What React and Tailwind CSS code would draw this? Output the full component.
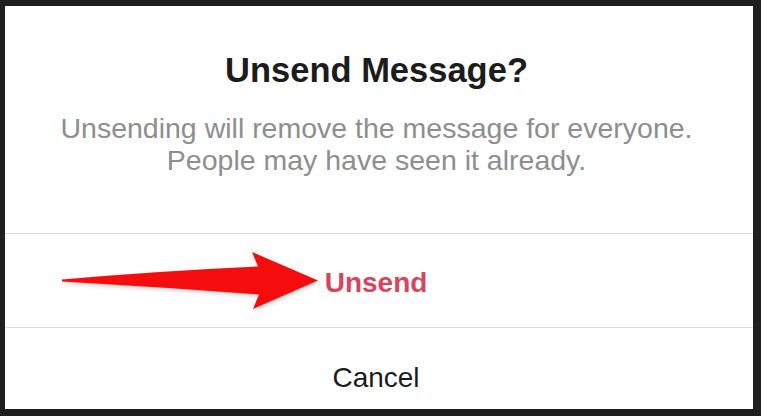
export default function App() {
  return (
    <div
      className="relative w-[761px] h-[416px] bg-[#1f1f1f] pt-[6px] pl-[5px] pr-[8px] pb-[7px]"
      style={{ fontFamily: '"Liberation Sans", Arial, sans-serif' }}
    >
      <div className="w-full h-full bg-white flex flex-col">
        <div className="h-[227px] flex flex-col items-center pt-[44px] pr-[5px]">
          <div className="text-[34.5px] leading-[40px] font-bold text-[#1c1c1c]">Unsend Message?</div>
          <div className="mt-[22px] text-[28.5px] leading-[32px] text-[#8e8e8e] text-center">
            <div>Unsending will remove the message for everyone.</div>
            <div>People may have seen it already.</div>
          </div>
        </div>
        <div className="h-[1px] bg-[#dcdcdc]" />
        <div className="h-[93px] flex justify-center pt-[33px] pr-[6px]">
          <div className="text-[28px] leading-[32px] font-bold text-[#d9445d]">Unsend</div>
        </div>
        <div className="h-[1px] bg-[#dcdcdc]" />
        <div className="flex-1 flex justify-center pt-[34px] pr-[6px]">
          <div className="text-[28px] leading-[32px] text-[#1c1c1c]">Cancel</div>
        </div>
      </div>
      <svg
        className="absolute left-0 top-0 pointer-events-none"
        width="761"
        height="416"
        viewBox="0 0 761 416"
      >
        <defs>
          <filter id="sh" x="-10%" y="-30%" width="120%" height="160%">
            <feDropShadow dx="1" dy="2" stdDeviation="2" floodColor="#000" floodOpacity="0.18" />
          </filter>
        </defs>
        <path
          d="M62 279.5 Q160 271 258 266.5 L252 252 L318 280.5 L253 309 L259 294.5 Q160 287 62 281.5 Z"
          fill="#f50a0a"
          filter="url(#sh)"
        />
      </svg>
    </div>
  );
}
